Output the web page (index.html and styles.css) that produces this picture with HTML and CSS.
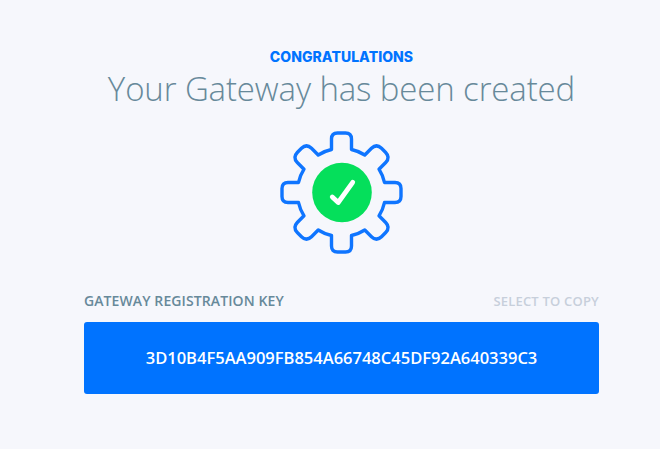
FILE: index.html
```html
<!DOCTYPE html>
<html lang="en">
<head>
<meta charset="utf-8">
<title>Gateway created</title>
<link rel="stylesheet" href="styles.css">
</head>
<body>
<main class="page">
  <p class="eyebrow">CONGRATULATIONS</p>
  <h1 class="title">Your Gateway has been created</h1>
  <svg class="gear" width="124" height="124" viewBox="-61.500 -61.500 124 124" aria-hidden="true">
    <path fill="none" stroke="#0f75ff" stroke-width="3.400" stroke-linejoin="round" d="M-10-43V-53.500Q-10-59.500-4-59.500H4Q10-59.500 10-53.500V-43Q17-41.500 23.300-37.500L30-44.200Q35-49 40-44.200L44.200-40Q49-35 44.200-30L37.500-23.300Q41.500-17 43-10H53.500Q59.500-10 59.500-4V4Q59.500 10 53.500 10H43Q41.500 17 37.500 23.300L44.200 30Q49 35 44.200 40L40 44.200Q35 49 30 44.200L23.300 37.500Q17 41.500 10 43V53.500Q10 59.500 4 59.500H-4Q-10 59.500-10 53.500V43Q-17 41.500-23.300 37.500L-30 44.200Q-35 49-40 44.200L-44.200 40Q-49 35-44.200 30L-37.500 23.300Q-41.500 17-43 10H-53.500Q-59.500 10-59.500 4V-4Q-59.500-10-53.500-10H-43Q-41.500-17-37.500-23.300L-44.200-30Q-49-35-44.200-40L-40-44.200Q-35-49-30-44.200L-23.300-37.500Q-17-41.500-10-43Z"/>
    <circle cx="0.500" r="29.800" fill="#05df5b"/>
    <path d="M-9.200 4.500L-3.300 10L11.200-10.200" fill="none" stroke="#fff" stroke-width="4.800" stroke-linecap="round" stroke-linejoin="round"/>
  </svg>
  <section class="key">
    <div class="labels"><span class="name">GATEWAY REGISTRATION KEY</span><span class="hint">SELECT TO COPY</span></div>
    <div class="value"><span>3D10B4F5AA909FB854A66748C45DF92A640339C3</span></div>
  </section>
</main>
</body>
</html>
```
FILE: styles.css
```css
* { box-sizing: border-box; }
body { margin: 0; background: #f6f7fc; font-family: "Open Sans", sans-serif; }
.page { height: 449px; padding: 48px 61px 0 84px; display: flex; flex-direction: column; align-items: center; white-space: nowrap; }
.eyebrow { margin: 0; color: #0073ff; font-family: Inter, sans-serif; font-size: 14px; line-height: 18px; font-weight: 800; letter-spacing: 0.050px; }
.title { margin: 0; color: #67899a; font-size: 33px; line-height: 46px; font-weight: 300; letter-spacing: -0.130px; }
.gear { display: block; margin-top: 19px; }
.key { width: 100%; margin-top: 36px; }
.labels { display: flex; justify-content: space-between; line-height: 20px; font-size: 14px; font-weight: 600; letter-spacing: 0.100px; color: #67899a; }
.hint { color: #c7cfdb; font-size: 13px; letter-spacing: 0.200px; }
.value { display: flex; align-items: center; justify-content: center; margin-top: 10.500px; height: 72px; border-radius: 3px; background: #0073ff; color: #fff; font-size: 16.500px; font-weight: 600; }
```
